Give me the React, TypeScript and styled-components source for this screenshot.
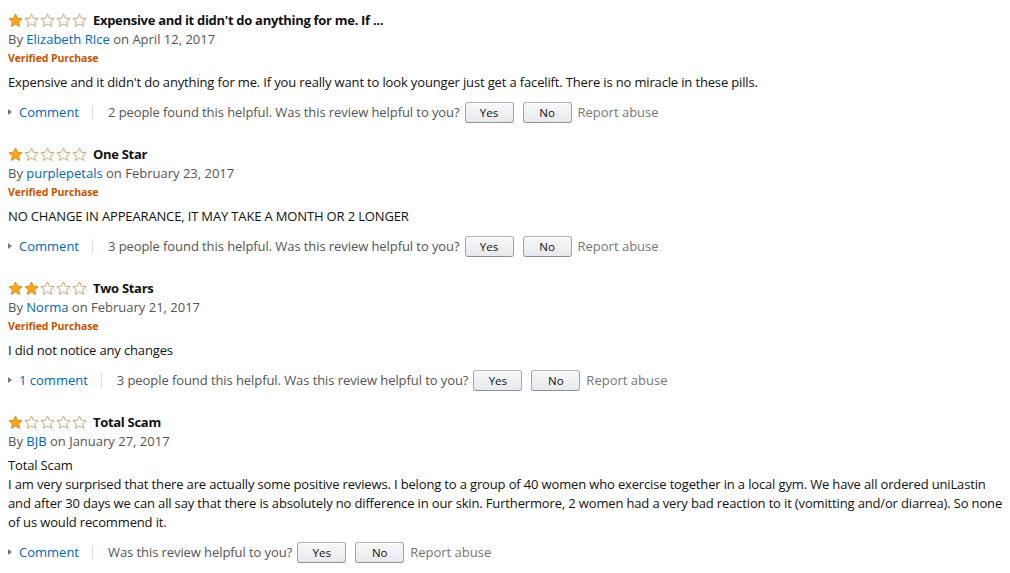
import React from "react";
import styled, { createGlobalStyle } from "styled-components";

const GlobalStyle = createGlobalStyle`
  html, body { margin: 0; padding: 0; background: #fff; }
  body { font-family: "Open Sans", "Liberation Sans", Arial, sans-serif; color: #111; }
`;

const Page = styled.div`
  display: flex;
  flex-direction: column;
  gap: 21px;
  padding: 10px 0 0 8px;
`;

const Review = styled.div`
  display: flex;
  flex-direction: column;
`;

const TitleRow = styled.div`
  display: flex;
  align-items: center;
  height: 20px;
  gap: 6px;
`;

const Stars = styled.div`
  display: flex;
  align-items: center;
  gap: 1px;
`;

const Title = styled.span`
  font-size: 13px;
  font-weight: 700;
  letter-spacing: -0.3px;
  color: #111;
  line-height: 20px;
`;

const Byline = styled.div`
  font-size: 13px;
  line-height: 19px;
  color: #555;
`;

const Link = styled.a`
  color: #0066c0;
  text-decoration: none;
  cursor: pointer;
`;

const Verified = styled.div`
  font-size: 10.5px;
  font-weight: 700;
  letter-spacing: -0.1px;
  line-height: 19px;
  color: #c45500;
`;

const Body = styled.div`
  margin-top: 5px;
  font-size: 13px;
  letter-spacing: -0.15px;
  line-height: 19px;
  color: #111;
`;

const Actions = styled.div`
  margin-top: 9px;
  display: flex;
  align-items: center;
  height: 22px;
  font-size: 13px;
  color: #555;
`;

const Caret = styled.span`
  width: 0;
  height: 0;
  border-top: 3px solid transparent;
  border-bottom: 3px solid transparent;
  border-left: 4px solid #767676;
  margin-right: 7px;
`;

const Divider = styled.span`
  width: 1px;
  height: 15px;
  background: #ddd;
  margin: 0 15px 0 13px;
`;

const Helpful = styled.span`
  color: #555;
  letter-spacing: -0.08px;
  margin-right: 5px;
`;

const Button = styled.button`
  font-family: inherit;
  font-size: 11.5px;
  font-weight: 400;
  color: #111;
  width: 49px;
  height: 21px;
  padding: 0;
  margin-right: 9px;
  border: 1px solid #adb1b8;
  border-color: #adb1b8 #a2a6ac #8d9096;
  border-radius: 3px;
  background: linear-gradient(to bottom, #f7f8fa, #e7e9ec);
  box-shadow: inset 0 1px 0 rgba(255,255,255,0.6);
  cursor: pointer;
`;

const Report = styled.span`
  color: #767676;
  margin-left: -3px;
`;

const STAR =
  "8,1 10.1,5.6 15,6.1 11.3,9.4 12.4,14.3 8,11.8 3.6,14.3 4.7,9.4 1,6.1 5.9,5.6";

const Star: React.FC<{ filled: boolean }> = ({ filled }) => (
  <svg width="15" height="15" viewBox="0 0 16 16">
    <polygon
      points={STAR}
      fill={filled ? "#ffa41c" : "#fff"}
      stroke={filled ? "#d88a14" : "#c2a070"}
      strokeWidth="1"
      strokeLinejoin="round"
    />
  </svg>
);

type ReviewData = {
  rating: number;
  title: string;
  author: string;
  date: string;
  verified: boolean;
  body: React.ReactNode;
  comment: string;
  helpful: string;
};

const reviews: ReviewData[] = [
  {
    rating: 1,
    title: "Expensive and it didn't do anything for me. If ...",
    author: "Elizabeth RIce",
    date: "April 12, 2017",
    verified: true,
    body: "Expensive and it didn't do anything for me. If you really want to look younger just get a facelift. There is no miracle in these pills.",
    comment: "Comment",
    helpful: "2 people found this helpful. Was this review helpful to you?",
  },
  {
    rating: 1,
    title: "One Star",
    author: "purplepetals",
    date: "February 23, 2017",
    verified: true,
    body: "NO CHANGE IN APPEARANCE, IT MAY TAKE A MONTH OR 2 LONGER",
    comment: "Comment",
    helpful: "3 people found this helpful. Was this review helpful to you?",
  },
  {
    rating: 2,
    title: "Two Stars",
    author: "Norma",
    date: "February 21, 2017",
    verified: true,
    body: "I did not notice any changes",
    comment: "1 comment",
    helpful: "3 people found this helpful. Was this review helpful to you?",
  },
  {
    rating: 1,
    title: "Total Scam",
    author: "BJB",
    date: "January 27, 2017",
    verified: false,
    body: (
      <>
        Total Scam
        <br />
        I am very surprised that there are actually some positive reviews. I belong to a group of 40 women who exercise together in a local gym. We have all ordered uniLastin and after 30 days we can all say that there is absolutely no difference in our skin. Furthermore, 2 women had a very bad reaction to it (vomitting and/or diarrea). So none of us would recommend it.
      </>
    ),
    comment: "Comment",
    helpful: "Was this review helpful to you?",
  },
];

export default function App() {
  return (
    <>
      <GlobalStyle />
      <Page>
        {reviews.map((r, i) => (
          <Review key={i}>
            <TitleRow>
              <Stars>
                {[0, 1, 2, 3, 4].map((s) => (
                  <Star key={s} filled={s < r.rating} />
                ))}
              </Stars>
              <Title>{r.title}</Title>
            </TitleRow>
            <Byline>
              By <Link>{r.author}</Link> on {r.date}
            </Byline>
            {r.verified && <Verified>Verified Purchase</Verified>}
            <Body>{r.body}</Body>
            <Actions>
              <Caret />
              <Link>{r.comment}</Link>
              <Divider />
              <Helpful>{r.helpful}</Helpful>
              <Button>Yes</Button>
              <Button>No</Button>
              <Report>Report abuse</Report>
            </Actions>
          </Review>
        ))}
      </Page>
    </>
  );
}
